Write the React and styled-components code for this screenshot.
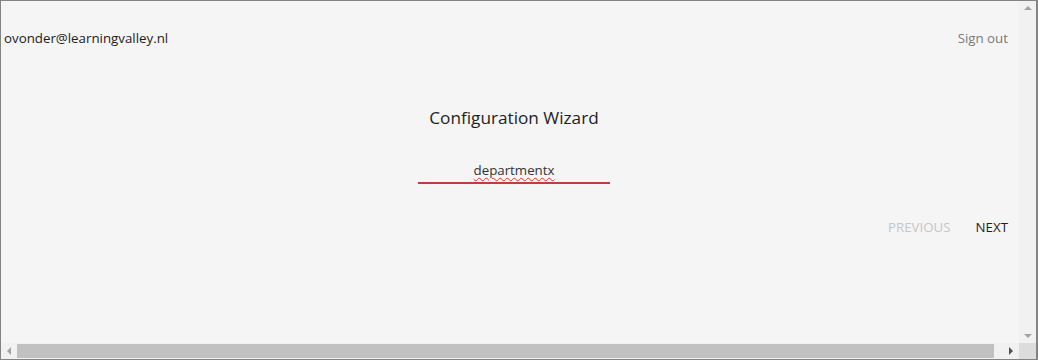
import React from "react";
import styled, { createGlobalStyle } from "styled-components";

const Global = createGlobalStyle`
  html, body { margin: 0; padding: 0; }
  body { font-family: "Segoe UI", "Open Sans", "Noto Sans", sans-serif; background: #fff; }
  * { box-sizing: border-box; }
`;

const Frame = styled.div`
  width: 1038px;
  height: 360px;
  border: 1px solid #848484;
  border-right-width: 2px;
  display: grid;
  grid-template-columns: 1fr 17px;
  grid-template-rows: 1fr 16px;
  background: #f5f5f5;
  overflow: hidden;
`;

const Content = styled.main`
  display: flex;
  flex-direction: column;
  padding: 27px 11px 0 3px;
  color: #1f1f1f;
  font-size: 13.3px;
  overflow: hidden;
`;

const Header = styled.header`
  display: flex;
  justify-content: space-between;
  align-items: center;
  height: 20px;
  line-height: 20px;
`;

const Email = styled.span`
  color: #1c1c1c;
`;

const SignOut = styled.a`
  color: #7a7a7a;
  text-decoration: none;
`;

const Wizard = styled.section`
  display: flex;
  flex-direction: column;
  align-items: center;
  padding-left: 16px;
  margin-top: 58px;
`;

const Title = styled.h1`
  margin: 0;
  font-size: 17.2px;
  font-weight: 400;
  line-height: 24px;
  color: #1f1f1f;
`;

const Field = styled.div`
  width: 192px;
  margin-top: 30px;
  border-bottom: 2px solid #c43b3b;
  text-align: center;
  line-height: 20px;
  padding-bottom: 2px;
`;

const Value = styled.span`
  color: #333;
  text-decoration: underline wavy #e0302b;
  text-decoration-thickness: 1px;
  text-underline-offset: 2px;
`;

const Actions = styled.div`
  display: flex;
  justify-content: flex-end;
  gap: 25px;
  margin-top: 33px;
  line-height: 20px;
`;

const NavButton = styled.span`
  color: ${(p) => (p.disabled ? "#c6c6c6" : "#1f1f1f")};
  text-transform: uppercase;
`;

const VTrack = styled.div`
  background: #f1f1f1;
  display: flex;
  flex-direction: column;
  justify-content: space-between;
  align-items: center;
  padding: 5px 0;
`;

const HTrack = styled.div`
  background: #f1f1f1;
  display: flex;
  align-items: center;
  padding: 1px 0;
`;

const Arrow = styled.svg`
  flex: none;
  width: ${(p) => p.w}px;
  height: ${(p) => p.h}px;
`;

const HThumb = styled.div`
  flex: 1;
  height: 14px;
  background: #c1c1c1;
  margin: 0 9px 0 0;
`;

const ArrowSlot = styled.div`
  width: 16px;
  display: flex;
  justify-content: center;
  flex: none;
`;

const Corner = styled.div`
  background: #dcdcdc;
`;

export default function App() {
  return (
    <>
      <Global />
      <Frame>
        <Content>
          <Header>
            <Email>ovonder@learningvalley.nl</Email>
            <SignOut href="#">Sign out</SignOut>
          </Header>
          <Wizard>
            <Title>Configuration Wizard</Title>
            <Field>
              <Value>departmentx</Value>
            </Field>
          </Wizard>
          <Actions>
            <NavButton disabled>Previous</NavButton>
            <NavButton>Next</NavButton>
          </Actions>
        </Content>
        <VTrack>
          <Arrow w={8} h={4} viewBox="0 0 8 4">
            <path d="M0 4 L4 0 L8 4 Z" fill="#a3a3a3" />
          </Arrow>
          <Arrow w={8} h={4} viewBox="0 0 8 4">
            <path d="M0 0 L4 4 L8 0 Z" fill="#a3a3a3" />
          </Arrow>
        </VTrack>
        <HTrack>
          <ArrowSlot>
            <Arrow w={4} h={8} viewBox="0 0 4 8">
              <path d="M4 0 L0 4 L4 8 Z" fill="#a3a3a3" />
            </Arrow>
          </ArrowSlot>
          <HThumb />
          <ArrowSlot>
            <Arrow w={4} h={8} viewBox="0 0 4 8">
              <path d="M0 0 L4 4 L0 8 Z" fill="#505050" />
            </Arrow>
          </ArrowSlot>
        </HTrack>
        <Corner />
      </Frame>
    </>
  );
}
